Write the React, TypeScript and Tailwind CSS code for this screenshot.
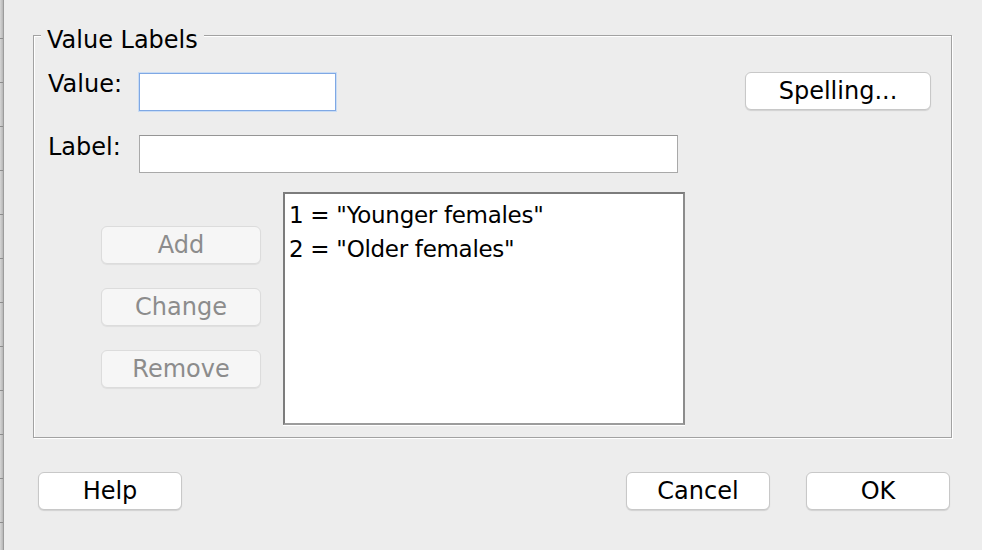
import React from "react";

const ticks = Array.from({ length: 12 }, (_, i) => i);

const values = [
  { value: 1, label: "Younger females" },
  { value: 2, label: "Older females" },
];

function PushButton({ children, className = "" }: { children: React.ReactNode; className?: string }) {
  return (
    <button
      type="button"
      className={
        "flex h-[38px] items-center justify-center rounded-[6px] border border-[#c8c8c8] bg-white leading-[28px] text-black shadow-[0_1px_1px_rgba(0,0,0,0.12)] " +
        className
      }
    >
      {children}
    </button>
  );
}

function DisabledButton({ children }: { children: React.ReactNode }) {
  return (
    <button
      type="button"
      disabled
      className="flex h-[38px] w-[160px] items-center justify-center rounded-[6px] border border-[#dcdcdc] bg-[#f6f6f6] leading-[28px] text-[#8c8c8c] shadow-[0_1px_1px_rgba(0,0,0,0.06)]"
    >
      {children}
    </button>
  );
}

export default function App() {
  return (
    <div className="flex h-[550px] w-full overflow-hidden bg-[#ededed] font-['DejaVu_Sans',sans-serif] text-[24px] text-black">
      {/* sliver of the window behind */}
      <div className="flex h-full w-[4px] flex-col gap-[43px] border-r border-[#9c9c9c] bg-gradient-to-r from-[#d6d6d6] to-[#b6b6b6] pt-[38px]">
        {ticks.map((t) => (
          <div key={t} className="h-px w-full bg-[#8c8c8c]" />
        ))}
      </div>

      <div className="flex flex-1 flex-col">
        {/* Value Labels group */}
        <div className="relative ml-[29px] mt-[35px] w-[919px] border border-[#a2a2a2] pb-[12px] shadow-[inset_1px_1px_0_#fff,1px_1px_0_#fff]">
          <span className="absolute left-[7px] top-[-10px] bg-[#ededed] px-[6px] leading-[28px]">Value Labels</span>

          <div className="mt-[36px] flex items-start pl-[14px]">
            <span className="-mt-[2px] w-[91px] leading-[28px]">Value:</span>
            <div className="mt-px h-[38px] w-[197px] border border-[#7fa8e4] bg-white shadow-[0_0_0_1px_#c9dcf4]" />
            <PushButton className="ml-auto mr-[20px] w-[186px]">Spelling...</PushButton>
          </div>

          <div className="mt-[24px] flex items-start pl-[14px]">
            <span className="-mt-[2px] w-[91px] leading-[28px]">Label:</span>
            <div className="h-[38px] w-[539px] border border-[#a9a9a9] border-t-[#959595] bg-white" />
          </div>

          <div className="mt-[19px] flex items-start">
            <div className="ml-[67px] flex flex-col gap-[24px] pt-[34px]">
              <DisabledButton>Add</DisabledButton>
              <DisabledButton>Change</DisabledButton>
              <DisabledButton>Remove</DisabledButton>
            </div>
            <div className="ml-[22px] h-[233px] w-[402px] border-2 border-[#7c7c7c] border-b-[#9c9c9c] border-r-[#8c8c8c] bg-white pl-[4px] pt-[4px] text-[23px] leading-[34px] tracking-[-0.3px] shadow-[0_1px_0_#fff]">
              {values.map((v) => (
                <div key={v.value} className="whitespace-pre">
                  {v.value} = "{v.label}"
                </div>
              ))}
            </div>
          </div>
        </div>

        {/* dialog buttons */}
        <div className="mt-[34px] flex items-center pr-[32px]">
          <PushButton className="ml-[34px] w-[144px]">Help</PushButton>
          <PushButton className="ml-auto w-[144px]">Cancel</PushButton>
          <PushButton className="ml-[36px] w-[144px]">OK</PushButton>
        </div>
      </div>
    </div>
  );
}
